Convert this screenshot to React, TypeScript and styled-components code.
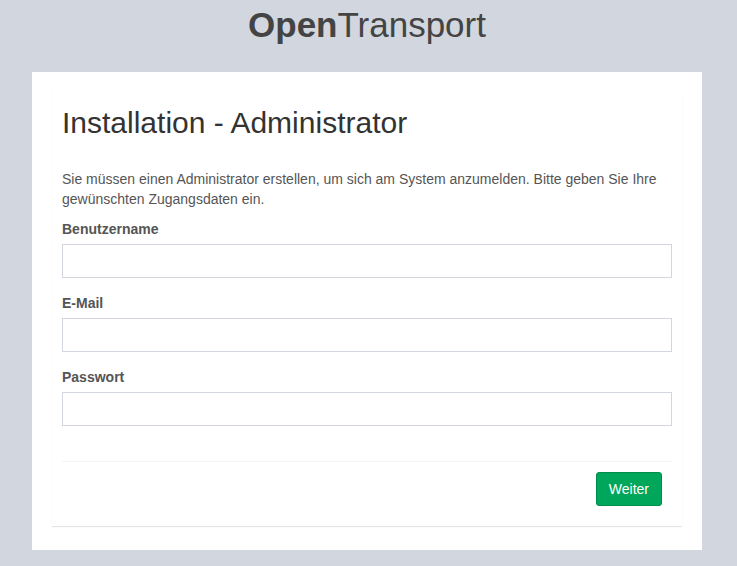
import * as React from 'react';
import styled, { createGlobalStyle } from 'styled-components';

const GlobalStyle = createGlobalStyle`
  html, body {
    margin: 0;
    padding: 0;
    background: #d2d6de;
    font-family: 'Liberation Sans', Arial, sans-serif;
    font-size: 14px;
    line-height: 20px;
    color: #444;
  }
  * {
    box-sizing: border-box;
  }
`;

const Page = styled.div`
  width: 670px;
  margin-left: 32px;
  padding-bottom: 16px;
`;

const Logo = styled.div`
  font-size: 35px;
  line-height: 50px;
  text-align: center;
  color: #444;
  margin-bottom: 22px;

  b {
    font-weight: 700;
  }
`;

const Panel = styled.div`
  background: #fff;
  padding: 20px 20px 24px 20px;
`;

const Box = styled.div`
  background: #fff;
  padding: 10px;
  box-shadow: 0 1px 1px rgba(0, 0, 0, 0.1);
`;

const Title = styled.h1`
  margin: 4px 0 30px;
  font-size: 30px;
  line-height: 33px;
  font-weight: 400;
  color: #333;
`;

const Intro = styled.p`
  margin: 0 0 10px;
  color: #555;
`;

const FormGroup = styled.div`
  margin-bottom: 15px;
`;

const Label = styled.label`
  display: block;
  font-weight: 700;
  color: #555;
  margin-bottom: 5px;
`;

const Input = styled.input`
  display: block;
  width: 100%;
  height: 34px;
  padding: 6px 12px;
  border: 1px solid #d2d6de;
  border-radius: 0;
  font-family: inherit;
  font-size: 14px;
  color: #555;
  outline: none;
`;

const Footer = styled.div`
  margin-top: 35px;
  padding: 10px;
  border-top: 1px solid #f4f4f4;
  display: flex;
  justify-content: flex-end;
`;

const Button = styled.button`
  height: 34px;
  padding: 6px 12px;
  font-family: inherit;
  font-size: 14px;
  line-height: 20px;
  color: #fff;
  background: #00a65a;
  border: 1px solid #008d4c;
  border-radius: 3px;
  cursor: pointer;
`;

const fields = [
  { id: 'username', label: 'Benutzername', type: 'text' },
  { id: 'email', label: 'E-Mail', type: 'email' },
  { id: 'password', label: 'Passwort', type: 'password' },
];

export default function App() {
  return (
    <>
      <GlobalStyle />
      <Page>
        <Logo>
          <b>Open</b>Transport
        </Logo>
        <Panel>
          <Box>
            <Title>Installation - Administrator</Title>
            <Intro>
              Sie müssen einen Administrator erstellen, um sich am System anzumelden. Bitte geben Sie Ihre
              gewünschten Zugangsdaten ein.
            </Intro>
            {fields.map((f) => (
              <FormGroup key={f.id}>
                <Label htmlFor={f.id}>{f.label}</Label>
                <Input id={f.id} type={f.type} />
              </FormGroup>
            ))}
            <Footer>
              <Button type="button">Weiter</Button>
            </Footer>
          </Box>
        </Panel>
      </Page>
    </>
  );
}
